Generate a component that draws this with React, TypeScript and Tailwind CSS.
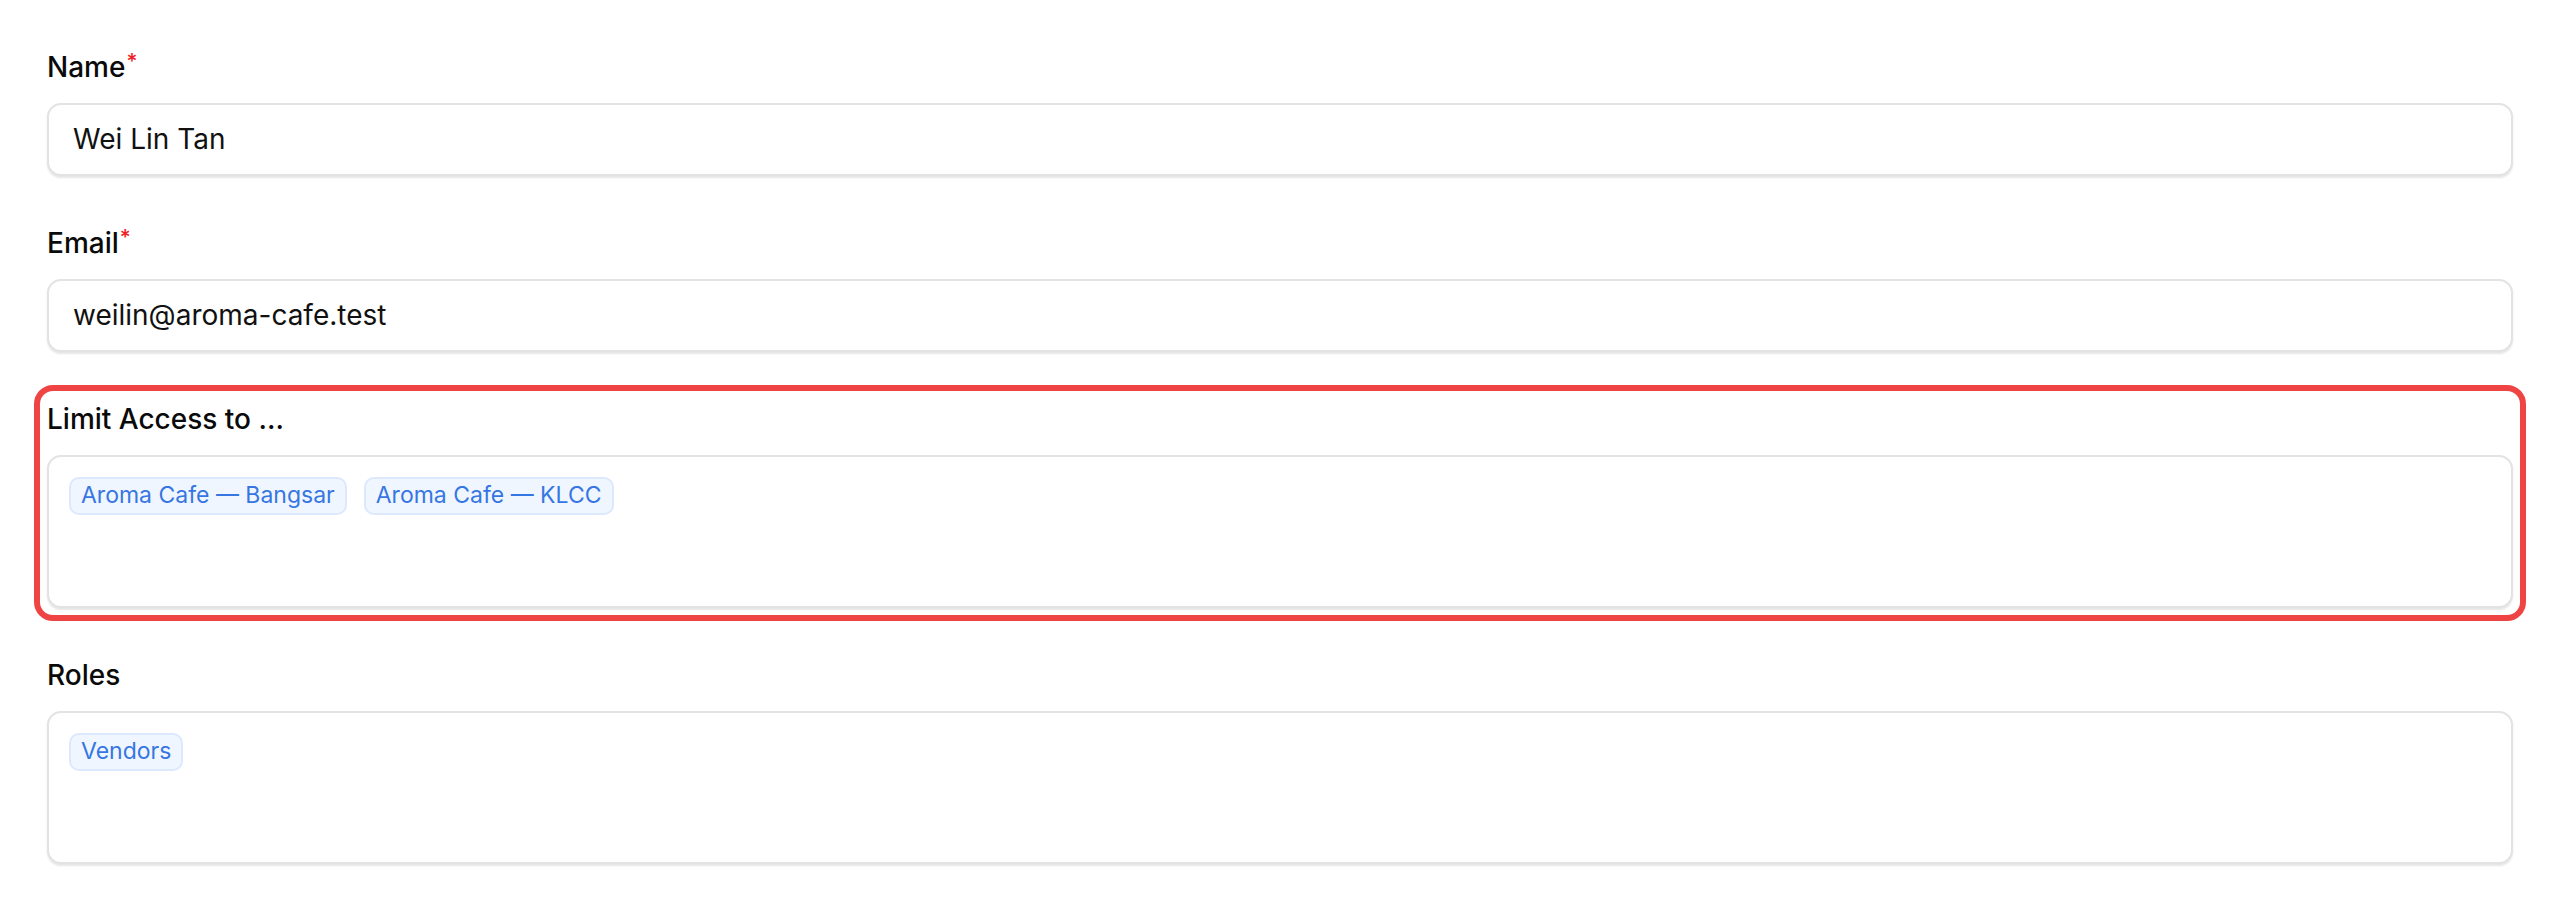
import React from "react";

function Label({ text, required }: { text: string; required?: boolean }) {
  return (
    <div className="text-[28px] leading-[42px] font-medium text-[#0a0a0a]">
      {text}
      {required && (
        <span className="text-[21px] leading-none text-[#f01c24] align-top relative top-[5px] ml-[1px]">*</span>
      )}
    </div>
  );
}

function TextBox({ value }: { value: string }) {
  return (
    <div className="mt-[14.5px] h-[73px] rounded-[14px] border-2 border-[#e3e3e3] bg-white shadow-[0_2px_2px_rgba(0,0,0,0.1)] flex items-center pl-[24px] text-[28px] text-[#111111]">
      {value}
    </div>
  );
}

function Chip({ text }: { text: string }) {
  return (
    <span className="inline-flex items-center h-[38px] px-[10px] border-2 border-[#dce9fc] bg-[#f0f6ff] rounded-[10px] text-[23px] text-[#3676e3] whitespace-nowrap">
      {text}
    </span>
  );
}

function MultiBox({ items }: { items: string[] }) {
  return (
    <div className="mt-[14.5px] h-[153px] rounded-[14px] border-2 border-[#e3e3e3] bg-white shadow-[0_2px_2px_rgba(0,0,0,0.1)] p-[20px] flex flex-wrap content-start items-start gap-[17px]">
      {items.map((t) => (
        <Chip key={t} text={t} />
      ))}
    </div>
  );
}

export default function App() {
  return (
    <div className="min-h-screen bg-white font-['Inter',_'Noto_Sans',_sans-serif] px-[47px] pt-[46px]">
      <div className="flex flex-col gap-[46.5px]">
        <div>
          <Label text="Name" required />
          <TextBox value="Wei Lin Tan" />
        </div>
        <div>
          <Label text="Email" required />
          <TextBox value="weilin@aroma-cafe.test" />
        </div>
        <div className="rounded-[6px] outline-6 outline-solid outline-[#ef4444] outline-offset-[7px]">
          <Label text="Limit Access to ..." />
          <MultiBox items={["Aroma Cafe — Bangsar", "Aroma Cafe — KLCC"]} />
        </div>
        <div>
          <Label text="Roles" />
          <MultiBox items={["Vendors"]} />
        </div>
      </div>
    </div>
  );
}
